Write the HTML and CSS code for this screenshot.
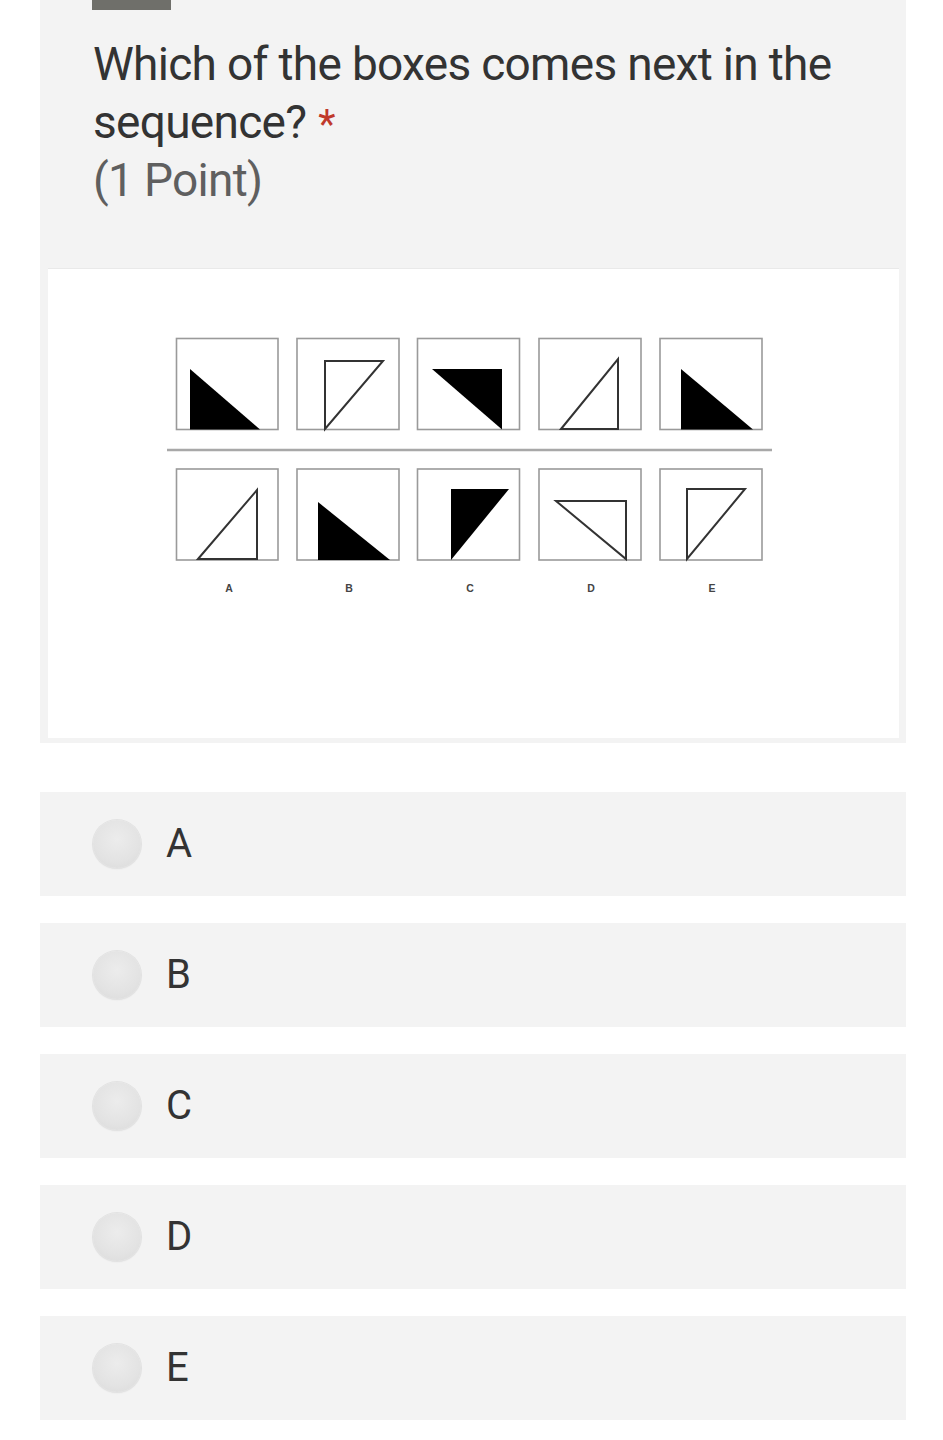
FILE: index.html
```html
<!DOCTYPE html>
<html>
<head>
<meta charset="utf-8">
<link rel="stylesheet" href="styles.css">
</head>
<body>
<div class="card">
  <div class="tab"></div>
  <div class="title">Which of the boxes comes next in the sequence?<span class="req">*</span></div>
  <div class="points">(1 Point)</div>
  <div class="figure">
    <svg class="puzzle" width="851" height="470" viewBox="48 268 851 470" xmlns="http://www.w3.org/2000/svg">
      <g class="frames" fill="#fff" stroke="#9a9a9a" stroke-width="1.6">
        <rect x="176.5" y="338.5" width="101.5" height="91"/>
        <rect x="297" y="338.5" width="102" height="91"/>
        <rect x="417.5" y="338.5" width="102" height="91"/>
        <rect x="539" y="338.5" width="102" height="91"/>
        <rect x="660" y="338.5" width="102" height="91"/>
        <rect x="176.5" y="469" width="101.5" height="91"/>
        <rect x="297" y="469" width="102" height="91"/>
        <rect x="417.5" y="469" width="102" height="91"/>
        <rect x="539" y="469" width="102" height="91"/>
        <rect x="660" y="469" width="102" height="91"/>
      </g>
      <line x1="167" y1="450" x2="772" y2="450" stroke="#a8a8a8" stroke-width="2.5"/>
      <polygon points="190,369 190,429.5 260,429.5" fill="#000"/>
      <polygon points="325,361 383,361 325,429" fill="none" stroke="#333" stroke-width="2"/>
      <polygon points="432,369 502,369 502,429.5" fill="#000"/>
      <polygon points="561,429 618,359 618,429" fill="none" stroke="#333" stroke-width="2"/>
      <polygon points="681,369 681,429.5 753,429.5" fill="#000"/>
      <polygon points="198,559 257,490 257,559" fill="none" stroke="#333" stroke-width="2"/>
      <polygon points="318,502 318,560 390,560" fill="#000"/>
      <polygon points="451,489 509,489 451,560" fill="#000"/>
      <polygon points="556,501 626,501 626,559" fill="none" stroke="#333" stroke-width="2"/>
      <polygon points="687,489 745,489 687,559" fill="none" stroke="#333" stroke-width="2"/>
      <g class="letters" fill="#444" font-family="Liberation Sans, Arial, sans-serif" font-size="10.5" font-weight="bold" text-anchor="middle">
        <text x="229" y="592">A</text>
        <text x="349" y="592">B</text>
        <text x="470" y="592">C</text>
        <text x="591" y="592">D</text>
        <text x="712" y="592">E</text>
      </g>
    </svg>
  </div>
</div>

<div class="options">
  <label class="option"><span class="radio"></span><span class="opt-text">A</span></label>
  <label class="option"><span class="radio"></span><span class="opt-text">B</span></label>
  <label class="option"><span class="radio"></span><span class="opt-text">C</span></label>
  <label class="option"><span class="radio"></span><span class="opt-text">D</span></label>
  <label class="option"><span class="radio"></span><span class="opt-text">E</span></label>
</div>
</body>
</html>
```
FILE: styles.css
```css
html, body {
  margin: 0;
  padding: 0;
  background: #ffffff;
}

body {
  font-family: Roboto, "Liberation Sans", Arial, sans-serif;
  color: #333333;
  width: 943px;
}

.card {
  margin-left: 40px;
  width: 866px;
  background: #f3f3f3;
  padding-bottom: 5px;
  display: flex;
  flex-direction: column;
}

.tab {
  margin-left: 52px;
  width: 79px;
  height: 10px;
  background: #6f6f6a;
}

.title {
  margin-top: 25px;
  padding-left: 53px;
  padding-right: 20px;
  font-size: 46px;
  line-height: 58px;
  letter-spacing: -0.7px;
  color: #333333;
}

.req {
  display: inline-block;
  color: #c0392b;
  margin-left: 12px;
  font-size: 40px;
  line-height: 40px;
  letter-spacing: 0;
  vertical-align: baseline;
}

.points {
  padding-left: 53px;
  font-size: 46px;
  line-height: 58px;
  letter-spacing: -0.7px;
  color: #5f5f5f;
}

.figure {
  margin: 59px 7px 0 8px;
  height: 470px;
  background: #ffffff;
  border-top: 1px solid #e9e9e9;
  box-sizing: border-box;
  overflow: hidden;
}

.puzzle {
  display: block;
  margin-top: -1px;
}

.options {
  margin-top: 49px;
  display: flex;
  flex-direction: column;
  gap: 27px;
}

.option {
  margin-left: 40px;
  width: 866px;
  height: 104px;
  background: #f3f3f3;
  display: flex;
  align-items: center;
  padding-left: 53px;
  box-sizing: border-box;
  gap: 25px;
}

.radio {
  width: 48px;
  height: 48px;
  border-radius: 50%;
  background: radial-gradient(circle at 50% 40%, #ececec 0%, #e3e3e3 60%, #d9d9d9 100%);
  box-shadow: 0 0 0 1px #e2e2e2, 0 1px 2px rgba(0,0,0,0.08);
  flex: none;
}

.opt-text {
  font-size: 40px;
  line-height: 1;
  color: #333333;
}
```
